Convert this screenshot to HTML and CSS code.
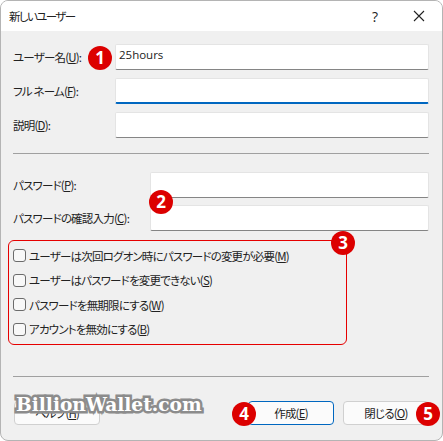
FILE: index.html
```html
<!DOCTYPE html>
<html lang="ja">
<head>
    <meta charset="UTF-8">
    <meta name="viewport" content="width=device-width, initial-scale=1.0">
    <title>新しいユーザー</title>
    <link rel="stylesheet" href="styles.css">
</head>
<body>
    <div class="dialog">
        <div class="titlebar">
            <span class="title">新しいユーザー</span>
            <span class="help-mark">?</span>
            <svg class="close-mark" width="12" height="12" viewBox="0 0 12 12">
                <path d="M1 1 L11 11 M11 1 L1 11" stroke="#222" stroke-width="1.1" fill="none"/>
            </svg>
        </div>

        <div class="content">
            <div class="rows rows-user">
                <div class="row">
                    <label>ユーザー名(<u>U</u>):</label>
                    <div class="input input-wide">25hours</div>
                </div>
                <div class="row">
                    <label>フル ネーム(<u>F</u>):</label>
                    <div class="input input-wide focused"></div>
                </div>
                <div class="row">
                    <label>説明(<u>D</u>):</label>
                    <div class="input input-wide"></div>
                </div>
            </div>

            <hr class="divider">

            <div class="rows rows-password">
                <div class="row">
                    <label>パスワード(<u>P</u>):</label>
                    <div class="input input-narrow"></div>
                </div>
                <div class="row">
                    <label>パスワードの確認入力(<u>C</u>):</label>
                    <div class="input input-narrow"></div>
                </div>
            </div>

            <div class="options">
                <div class="option"><span class="check"></span>ユーザーは次回ログオン時にパスワードの変更が必要(<u>M</u>)</div>
                <div class="option"><span class="check"></span>ユーザーはパスワードを変更できない(<u>S</u>)</div>
                <div class="option"><span class="check"></span>パスワードを無期限にする(<u>W</u>)</div>
                <div class="option"><span class="check"></span>アカウントを無効にする(<u>B</u>)</div>
            </div>

            <hr class="divider divider-bottom">

            <div class="buttons">
                <button class="btn btn-help">ヘルプ(<u>H</u>)</button>
                <button class="btn btn-default">作成(<u>E</u>)</button>
                <button class="btn">閉じる(<u>O</u>)</button>
            </div>
        </div>
    </div>

    <!-- 注釈 -->
    <span class="badge badge-1">1</span>
    <span class="badge badge-2">2</span>
    <span class="badge badge-3">3</span>
    <span class="badge badge-4">4</span>
    <span class="badge badge-5">5</span>
    <span class="watermark">BillionWallet.com</span>
</body>
</html>
```

FILE: styles.css
```css
* {
    box-sizing: border-box;
}

html,
body {
    margin: 0;
    height: 100%;
    background: #fff;
    overflow: hidden;
}

body {
    position: relative;
    font-family: "Noto Sans CJK JP", "Noto Sans", sans-serif;
    font-size: 11.5px;
    font-feature-settings: "palt";
    letter-spacing: -0.8px;
    color: #222;
}

.dialog {
    height: 441px;
    background: #f0f0f0;
    border: 1px solid #b4b4b4;
    border-radius: 8px;
    overflow: hidden;
}

.titlebar {
    display: flex;
    align-items: center;
    height: 30px;
    padding: 0 17px 0 8px;
    background: #fff;
}

.title {
    flex: 1;
    letter-spacing: -1.6px;
}

.help-mark {
    margin-right: 35px;
    font-family: "Open Sans", sans-serif;
    font-size: 14px;
    letter-spacing: 0;
}

.content {
    padding: 13px 13px 0 12px;
}

.rows {
    display: flex;
    flex-direction: column;
}

.rows-user {
    gap: 8px;
}

.rows-password {
    gap: 7px;
}

.row {
    display: flex;
    align-items: center;
    justify-content: space-between;
}

label {
    white-space: nowrap;
}

.input {
    height: 26px;
    padding: 0 3px;
    background: #fff;
    border: 1px solid #e4e4e4;
    border-bottom-color: #858585;
    border-radius: 2px;
    font-family: "Open Sans", sans-serif;
    font-size: 11.5px;
    letter-spacing: 0;
    line-height: 19px;
}

.input-wide {
    width: 314px;
}

.input-narrow {
    width: 279px;
}

.focused {
    border-bottom: 2px solid #0067c0;
}

.divider {
    height: 1px;
    margin: 15px 0 18px 0;
    background: #a0a0a0;
    border: 0;
}

.options {
    display: flex;
    flex-direction: column;
    gap: 5px;
    width: 339px;
    height: 105px;
    margin: 9px 0 0 -5px;
    padding: 5px 4px;
    border: 1px solid #e60000;
    border-radius: 6px;
}

.option {
    display: flex;
    align-items: center;
    height: 20px;
    white-space: nowrap;
}

.check {
    flex: none;
    width: 13px;
    height: 13px;
    margin-right: 3px;
    background: #f8f8f8;
    border: 1px solid #6b6b6b;
    border-radius: 3px;
}

.divider-bottom {
    margin: 31px 0 0 0;
}

.buttons {
    display: flex;
    margin-top: 24px;
    padding-left: 1px;
}

.btn {
    flex: none;
    width: 86px;
    height: 24px;
    padding: 0;
    margin-left: 9px;
    background: #fbfbfb;
    border: 1px solid #d0d0d0;
    border-radius: 4px;
    font: inherit;
    font-feature-settings: "palt";
    letter-spacing: -0.8px;
    color: #222;
}

.btn-help {
    margin-left: 0;
    margin-right: 139px;
}

.btn-default {
    border-color: #0067c0;
}

.badge {
    position: absolute;
    width: 24px;
    height: 24px;
    border-radius: 50%;
    background: #dc0000;
    color: #fff;
    font-family: "Open Sans", sans-serif;
    font-size: 17px;
    font-weight: 700;
    letter-spacing: 0;
    line-height: 24px;
    text-align: center;
}

.badge-1 { left: 88px; top: 46px; }
.badge-2 { left: 149px; top: 190px; }
.badge-3 { left: 331px; top: 231px; }
.badge-4 { left: 232px; top: 402px; }
.badge-5 { left: 416px; top: 402px; }

.watermark {
    position: absolute;
    left: 16px;
    top: 394px;
    font-family: "DejaVu Serif", serif;
    font-size: 18.6px;
    font-weight: 700;
    letter-spacing: 0;
    line-height: 22px;
    color: #fff;
    -webkit-text-stroke: 5px #8c8c8c;
    paint-order: stroke fill;
}
```
